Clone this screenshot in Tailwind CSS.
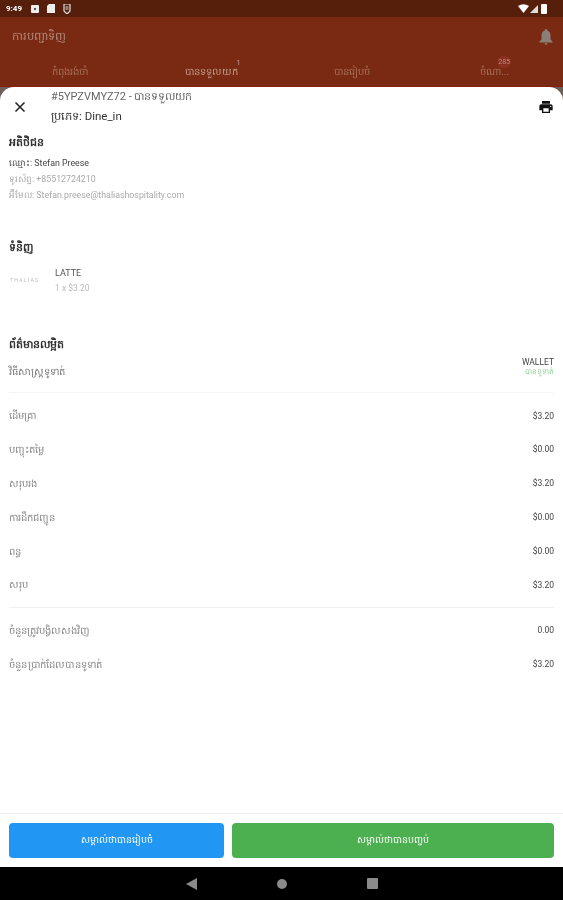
<!doctype html>
<html lang="km">
<head>
<meta charset="utf-8">
<script src="https://cdn.jsdelivr.net/npm/@tailwindcss/browser@4"></script>
</head>
<body class="m-0">
<div class="w-[563px] h-[900px] overflow-hidden flex flex-col bg-[#6b5f5a] blur-[0.4px] font-['Roboto','Noto_Sans','DejaVu_Sans',sans-serif] text-[#333]">
  <div class="h-[17px] shrink-0 bg-[#561f0b] flex items-center justify-between px-[6px] text-white">
    <div class="flex items-center gap-[8px]">
      <span class="text-[8px] font-bold leading-none mr-[1px]">9:49</span>
      <svg width="8" height="8" viewBox="0 0 8 8"><rect width="8" height="8" rx="1" fill="#eee"/><rect x="3" y="3" width="2" height="2" fill="#555"/></svg>
      <svg width="8" height="9" viewBox="0 0 8 9"><path d="M2 0h6v9H0V2z" fill="#eee"/></svg>
      <svg width="8" height="10" viewBox="0 0 8 10"><path d="M1 0h6v7L4 10 1 7z" fill="none" stroke="#ddd" stroke-width="1.2"/><path d="M2.500 3h3M2.500 5h3" stroke="#ddd"/></svg>
    </div>
    <div class="flex items-center gap-[1px] mr-[10px]">
      <svg width="11" height="9" viewBox="0 0 11 9"><path d="M0 2Q5.500-1.500 11 2L5.500 9z" fill="#fff"/></svg>
      <svg width="8" height="8" viewBox="0 0 8 8"><path d="M8 0v8H0z" fill="#ddd"/></svg>
      <svg width="6" height="10" viewBox="0 0 6 10" class="ml-[2px]"><rect width="6" height="10" rx="1" fill="#fff"/></svg>
    </div>
  </div>

  <div class="h-[70px] shrink-0 bg-[#7a2a12] border-b border-[#8a1c10] flex flex-col">
    <div class="h-[40px] flex items-center justify-between pl-[12px] pr-[10px]">
      <span class="text-[11.500px] text-[#b08a7a]">ការបញ្ជាទិញ</span>
      <svg width="14" height="16" viewBox="0 0 14 16"><path d="M7 0a1.200 1.200 0 0 1 1.200 1.400C10.500 2 11.500 4 11.500 6.500V10.500L13.500 12.500V13.500H.5V12.500L2.500 10.500V6.500C2.500 4 3.500 2 5.800 1.400A1.200 1.200 0 0 1 7 0zM5.500 14.300h3a1.500 1.500 0 0 1-3 0z" fill="#8b7d77"/></svg>
    </div>
    <div class="grid grid-cols-4 text-[10px] text-[#a5705a] text-center">
      <div class="pt-[7px]"><span class="ml-[-1px]">កំពុងរង់ចាំ</span></div>
      <div class="pt-[7px]"><span class="relative text-[#bd9c8d]">បានទទួលយក<span class="absolute right-[-3px] top-[-9px] text-[8px] text-[#bd9c8d]">1</span></span></div>
      <div class="pt-[7px]">បានរៀបចំ</div>
      <div class="pt-[7px] pl-[4px]"><span class="relative">ចំណា...<span class="absolute right-[-2px] top-[-10px] text-[7px] leading-[12px] px-[1px] rounded-full bg-[#8a3020] text-[#b08a7a]">285</span></span></div>
    </div>
  </div>

  <div class="flex-1 min-h-0 bg-white rounded-t-[14px] flex flex-col relative">
    <div class="h-[39px] shrink-0 flex items-center justify-between pl-[14px] pr-[9px]">
      <svg width="12" height="12" viewBox="0 0 12 12" class="mt-[1px]"><path d="M1.500 1.500l9 9M10.500 1.500l-9 9" stroke="#222" stroke-width="1.500"/></svg>
      <div class="flex-1 pl-[25px] flex flex-col">
        <span class="text-[11px] leading-[18px] text-[#666] mt-[-1px]">#5YPZVMYZ72 - បានទទួលយក</span>
        <span class="text-[11.500px] leading-[18px] text-[#333] mt-[1px]">ប្រភេទ: Dine_in</span>
      </div>
      <svg width="16" height="16" viewBox="0 0 24 24"><path d="M19 8H5c-1.660 0-3 1.340-3 3v6h4v4h12v-4h4v-6c0-1.660-1.340-3-3-3zm-3 11H8v-5h8v5zm3-7c-.550 0-1-.450-1-1s.450-1 1-1 1 .450 1 1-.450 1-1 1zm-1-9H6v4h12V3z" fill="#111"/></svg>
    </div>

    <div class="px-[9px] flex flex-col">
      <div class="mt-[7px] text-[11px] leading-[20px] font-bold text-[#333]">អតិថិជន</div>
      <div class="mt-[2px] text-[8.800px] leading-[16px] text-[#444]">ឈ្មោះ: Stefan Preese</div>
      <div class="text-[8.800px] leading-[16px] text-[#aaa]">ទូរស័ព្ទ: +85512724210</div>
      <div class="text-[8.800px] leading-[16px] text-[#aaa]">អ៊ីមែល: Stefan.preese@thaliashospitality.com</div>

      <div class="mt-[35px] text-[11px] leading-[20px] font-bold text-[#333]">ទំនិញ</div>
      <div class="mt-[7px] flex items-center h-[31px]">
        <div class="w-[46px] text-[5px] tracking-[1.300px] text-[#bbb] pl-[1px]">THALIAS</div>
        <div class="flex flex-col">
          <span class="text-[9px] leading-[15px] text-[#555]">LATTE</span>
          <span class="text-[8.500px] leading-[15px] text-[#bbb]">1 x $3.20</span>
        </div>
      </div>

      <div class="mt-[39px] text-[11px] leading-[20px] font-bold text-[#333]">ព័ត៌មានលម្អិត</div>
      <div class="h-[38px] flex items-center justify-between border-b border-[#f5f5f5]">
        <span class="text-[10px] text-[#777] mt-[-5px]">វិធីសាស្ត្រទូទាត់</span>
        <div class="flex flex-col items-end mt-[-13px]">
          <span class="text-[8.500px] leading-[10px] text-[#444]">WALLET</span>
          <span class="text-[7.500px] leading-[10px] text-[#8fcf92]">បានទូទាត់</span>
        </div>
      </div>

      <div class="mt-[6px] flex flex-col text-[10px] text-[#888]">
        <div class="h-[33.800px] flex items-center justify-between"><span>ដើមគ្រា</span><span class="text-[8.500px] text-[#444]">$3.20</span></div>
        <div class="h-[33.800px] flex items-center justify-between"><span>បញ្ចុះតម្លៃ</span><span class="text-[8.500px] text-[#444]">$0.00</span></div>
        <div class="h-[33.800px] flex items-center justify-between"><span>សរុបរង</span><span class="text-[8.500px] text-[#444]">$3.20</span></div>
        <div class="h-[33.800px] flex items-center justify-between"><span>ការដឹកជញ្ជូន</span><span class="text-[8.500px] text-[#444]">$0.00</span></div>
        <div class="h-[33.800px] flex items-center justify-between"><span>ពន្ធ</span><span class="text-[8.500px] text-[#444]">$0.00</span></div>
        <div class="h-[33.800px] flex items-center justify-between"><span>សរុប</span><span class="text-[8.500px] text-[#444]">$3.20</span></div>
      </div>
      <div class="mt-[5px] border-t border-[#f0f0f0]"></div>
      <div class="mt-[6px] flex flex-col text-[10px] text-[#888]">
        <div class="h-[33.500px] flex items-center justify-between"><span>ចំនួនត្រូវបង្វិលសងវិញ</span><span class="text-[8.500px] text-[#444]">0.00</span></div>
        <div class="h-[33.500px] flex items-center justify-between"><span class="tracking-[0.200px]">ចំនួនប្រាក់ដែលបានទូទាត់</span><span class="text-[8.500px] text-[#444]">$3.20</span></div>
      </div>
    </div>

    <div class="mt-auto h-[54px] shrink-0 border-t border-[#f0f0f0] flex gap-[8px] pl-[9px] pr-[9px] pt-[9px]">
      <div class="w-[215px] h-[35px] rounded-[4px] bg-[#2196f3] text-white text-[9.500px] flex items-center justify-center">សម្គាល់ថាបានរៀបចំ</div>
      <div class="flex-1 h-[35px] rounded-[4px] bg-[#4caf50] text-white text-[9.500px] flex items-center justify-center">សម្គាល់ថាបានបញ្ចប់</div>
    </div>
  </div>

  <div class="h-[33px] shrink-0 bg-black flex items-center justify-center gap-[80px]">
    <svg width="11" height="12" viewBox="0 0 11 12"><path d="M11 0v12L0 6z" fill="#8a8a8a"/></svg>
    <svg width="10" height="10" viewBox="0 0 10 10"><circle cx="5" cy="5" r="5" fill="#8a8a8a"/></svg>
    <svg width="11" height="11" viewBox="0 0 11 11"><rect width="11" height="11" rx="1" fill="#8a8a8a"/></svg>
  </div>
</div>
</body>
</html>
